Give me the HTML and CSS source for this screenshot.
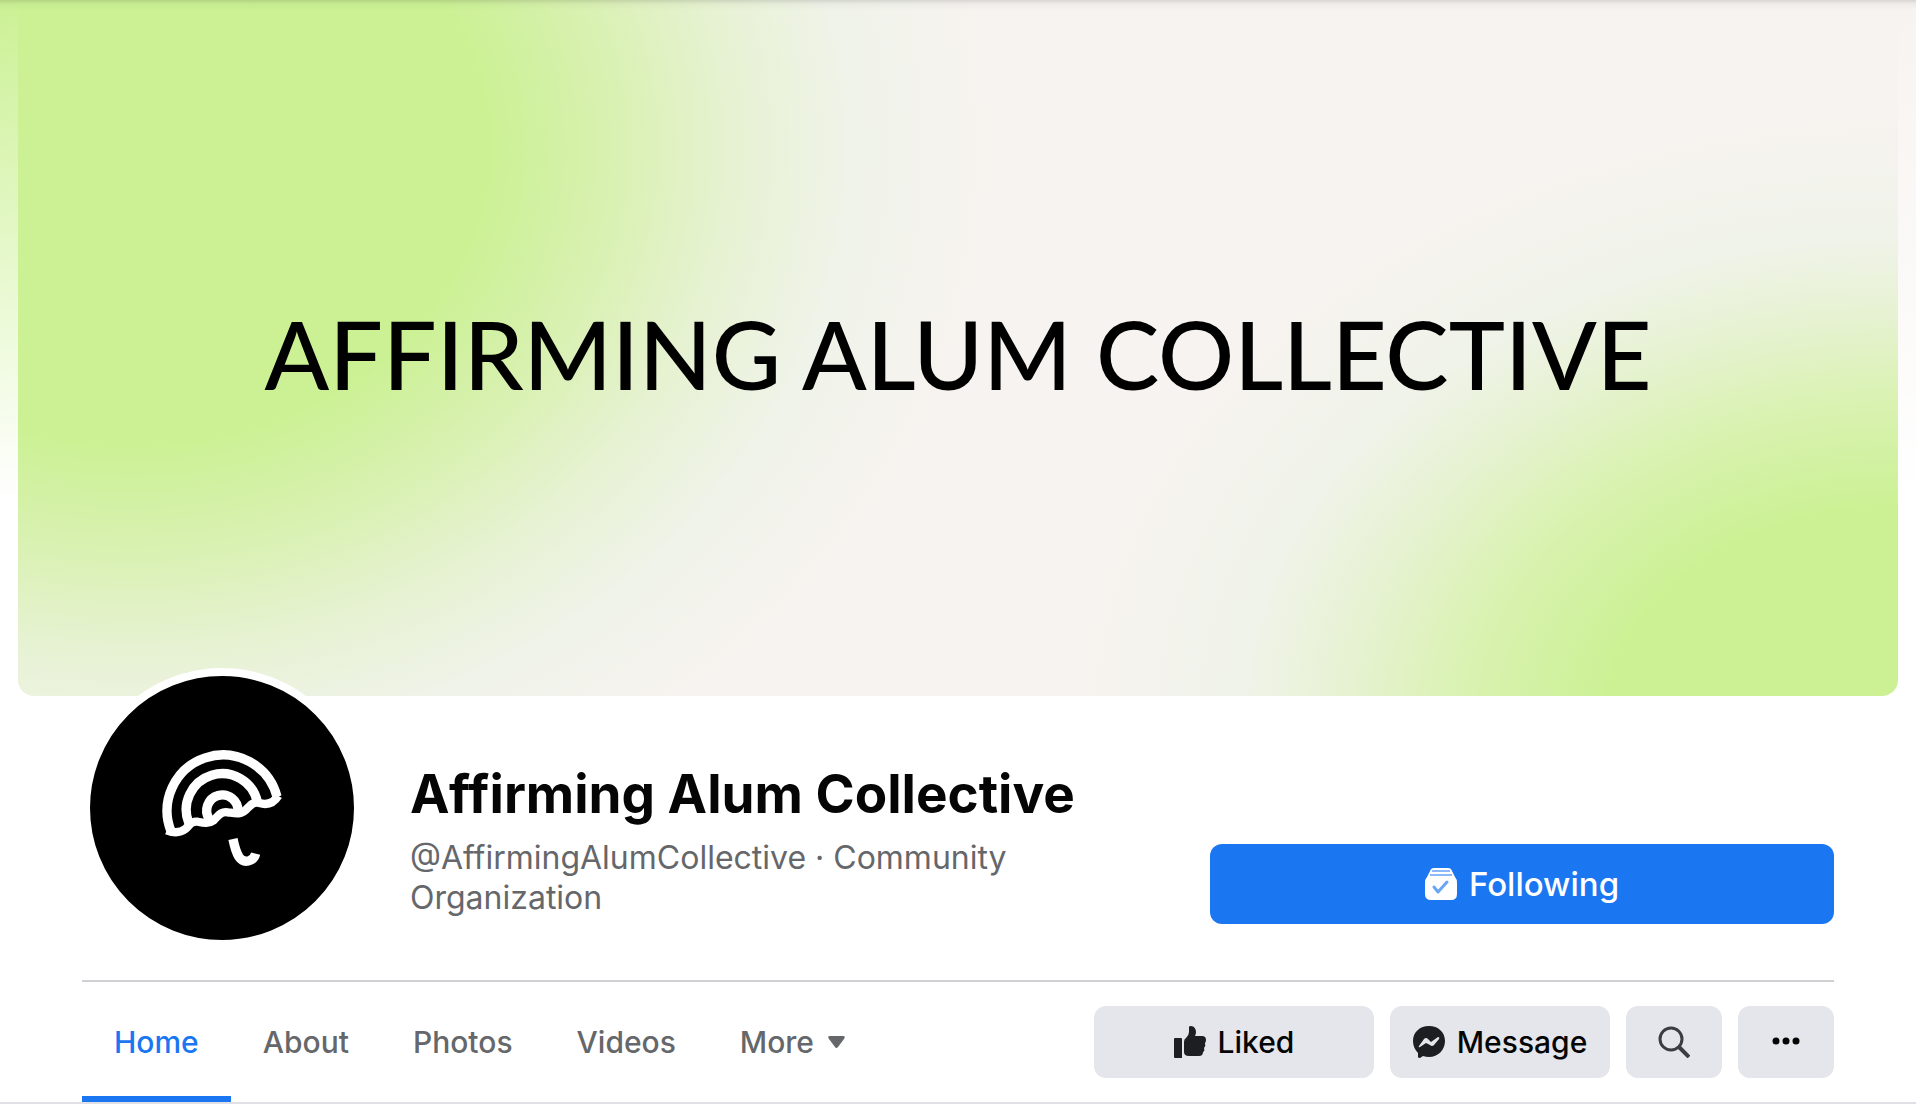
FILE: index.html
```html
<!DOCTYPE html>
<html lang="en">
<head>
  <meta charset="UTF-8" />
  <meta name="viewport" content="width=device-width, initial-scale=1.0"/>
  <title>Affirming Alum Collective</title>
  <link rel="stylesheet" href="styles.css">
</head>
<body>

  <header class="page-header">
    <div class="cover">
      <p class="cover-title">AFFIRMING ALUM COLLECTIVE</p>
    </div>

    <div class="content">
      <div class="profile">
        <svg class="avatar" viewBox="90 78 792 792" role="img" aria-label="Umbrella logo">
          <g fill="none" stroke="#fff" stroke-width="28">
            <path d="M334 546A167.5 167.5 0 1 1 651 440"/>
            <path d="M386 518A108 108 0 1 1 592 455"/>
            <path d="M448 508A47 47 0 1 1 534 484"/>
            <path stroke-width="25" d="M320 541Q354 554 376 537C389 527 391 513 412 515C432 519 446 522 461 511C476 496 482 484 503 487C525 490 541 495 557 480C572 465 580 454 598 459C621 466 641 459 655 437"/>
            <path d="M519 567Q526 603 537 621C551 642 581 635 587 611"/>
          </g>
        </svg>

        <div class="about">
          <h1>Affirming Alum Collective</h1>
          <p>@AffirmingAlumCollective · Community Organization</p>
        </div>

        <button class="btn btn-primary" type="button">
          <svg class="icon" viewBox="0 0 32 32">
            <path fill="#fff" d="M9 0H23Q26 0 27 3L30 9Q32 11 32 15V26Q32 32 26 32H6Q0 32 0 26V15Q0 11 2 9L5 3Q6 0 9 0Z"/>
            <path fill="none" stroke="#8ab8fa" stroke-width="2" d="M7 3H25M5 7H27"/>
            <path fill="none" stroke="#6ba5f8" stroke-width="3" stroke-linecap="round" stroke-linejoin="round" d="M9 19L13 24L22 14"/>
          </svg>
          Following
        </button>
      </div>

      <div class="toolbar">
        <nav class="tabs">
          <a class="active" href="#">Home</a>
          <a href="#">About</a>
          <a href="#">Photos</a>
          <a href="#">Videos</a>
          <a href="#">More
            <svg class="caret" viewBox="0 0 17 12"><path fill="currentColor" d="M2 0H15Q18 0 16 3L10 11Q8 13 7 11L1 3Q-1 0 2 0Z"/></svg>
          </a>
        </nav>

        <div class="actions">
          <button class="btn btn-liked" type="button">
            <svg class="icon" viewBox="0 0 32 32">
              <path fill="#1c1e21" d="M1 12H7Q8 12 8 13V32H1Q0 32 0 31V13Q0 12 1 12ZM15 1Q15 0 17 0C20 0 22 3 22 6Q22 8 21 10H28Q32 10 32 14Q32 16 31 17Q32 20 30 22Q31 25 29 26Q29 30 25 30H15Q10 30 10 26V16Q10 13 12 12Q15 9 15 6Z"/>
            </svg>
            Liked
          </button>
          <button class="btn btn-message" type="button">
            <svg class="icon" viewBox="0 0 32 32">
              <path fill="#1c1e21" d="M16 0C7 0 0 6 0 15C0 20 2 24 5 27V31Q5 32 7 32L10 30Q13 31 16 31C25 31 32 24 32 15C32 6 25 0 16 0Z"/>
              <path fill="#e4e6eb" d="M6 20L11 13Q13 11 15 13L18 16L25 11Q27 11 26 13L21 19Q19 21 17 19L13 17L7 21Q5 22 6 20Z"/>
            </svg>
            Message
          </button>
          <button class="btn btn-icon" type="button" aria-label="Search">
            <svg class="icon" viewBox="0 0 32 32" fill="none" stroke="#3b3d41">
              <circle cx="13" cy="13" r="11" stroke-width="3"/>
              <path stroke-width="4" d="M21 21L31 31"/>
            </svg>
          </button>
          <button class="btn btn-icon" type="button" aria-label="More options">
            <svg class="icon" viewBox="0 0 32 32" fill="#050505">
              <circle cx="6" cy="15" r="3.5"/>
              <circle cx="16" cy="15" r="3.5"/>
              <circle cx="26" cy="15" r="3.5"/>
            </svg>
          </button>
        </div>
      </div>
    </div>
  </header>

</body>
</html>
```
FILE: styles.css
```css
* {
  box-sizing: border-box;
}

body {
  margin: 0;
  background-color: #fff;
  color: #050505;
  font-family: Inter, sans-serif;
}

.page-header {
  position: relative;
  padding: 0 18px;
  border-bottom: 2px solid #dfe1e6;
  background: linear-gradient(to bottom, transparent, #fff 500px),
              linear-gradient(to right, #cbf194, #f7f3f0 50%);
}

/* shadow under the top bar */
.page-header::before {
  content: "";
  position: absolute;
  top: 0;
  left: 0;
  right: 0;
  height: 10px;
  background: linear-gradient(rgba(0,0,0,0.12), rgba(0,0,0,0.03) 40%, transparent);
}

.cover {
  display: flex;
  justify-content: center;
  align-items: center;
  height: 696px;
  padding-top: 10px;
  border-radius: 0 0 16px 16px;
  background:
    radial-gradient(ellipse 46% 104% at 6% 21%, #cbf194 41%, #d9f1b2 56%, #e7f2d3 70%, #f0f3ea 84%, rgba(247,243,240,0) 100%),
    radial-gradient(ellipse 44% 88% at 100% 104%, #cbf194 35%, #d9f2b0 52%, #e6f2d0 66%, #f0f3ea 80%, #f7f3f0 100%);
}

.cover-title {
  margin: 0;
  color: #000;
  font-family: Lato, sans-serif;
  font-size: 95px;
  font-weight: 500;
  line-height: 112px;
  white-space: nowrap;
}

.content {
  padding: 0 64px;
}

.profile {
  display: flex;
  align-items: flex-start;
  height: 284px;
}

.avatar {
  flex: none;
  width: 280px;
  height: 280px;
  margin-top: -28px;
  border: 8px solid #fff;
  border-radius: 50%;
  background-color: #000;
}

.about {
  flex: 1;
  padding: 64px 40px 0 48px;
}

.about h1 {
  margin: 0;
  font-size: 53px;
  font-weight: 700;
  line-height: 68px;
  white-space: nowrap;
}

.about p {
  margin: 10px 0 0;
  color: #65676b;
  font-size: 32px;
  line-height: 40px;
}

.btn {
  display: flex;
  justify-content: center;
  align-items: center;
  gap: 12px;
  height: 72px;
  padding: 0;
  border: none;
  border-radius: 12px;
  background-color: #e4e6eb;
  color: #050505;
  font-family: inherit;
  font-size: 30px;
  font-weight: 500;
  cursor: pointer;
}

.btn-primary {
  width: 624px;
  height: 80px;
  margin-top: 148px;
  background-color: #1b76f2;
  color: #fff;
  font-size: 33px;
}

.icon {
  width: 32px;
  height: 32px;
}

.toolbar {
  display: flex;
  justify-content: space-between;
  align-items: center;
  height: 122px;
  border-top: 2px solid #ced0d4;
}

.tabs {
  display: flex;
  align-self: stretch;
}

.tabs a {
  display: flex;
  align-items: center;
  gap: 14px;
  padding: 6px 32px 0;
  border-bottom: 6px solid transparent;
  color: #65676b;
  font-size: 30px;
  font-weight: 500;
  text-decoration: none;
}

.tabs a.active {
  border-bottom-color: #1b76f2;
  color: #1b76f2;
}

.caret {
  width: 17px;
  height: 12px;
}

.actions {
  display: flex;
  gap: 16px;
}

.btn-liked {
  width: 280px;
}

.btn-message {
  width: 220px;
}

.btn-icon {
  width: 96px;
}
```
